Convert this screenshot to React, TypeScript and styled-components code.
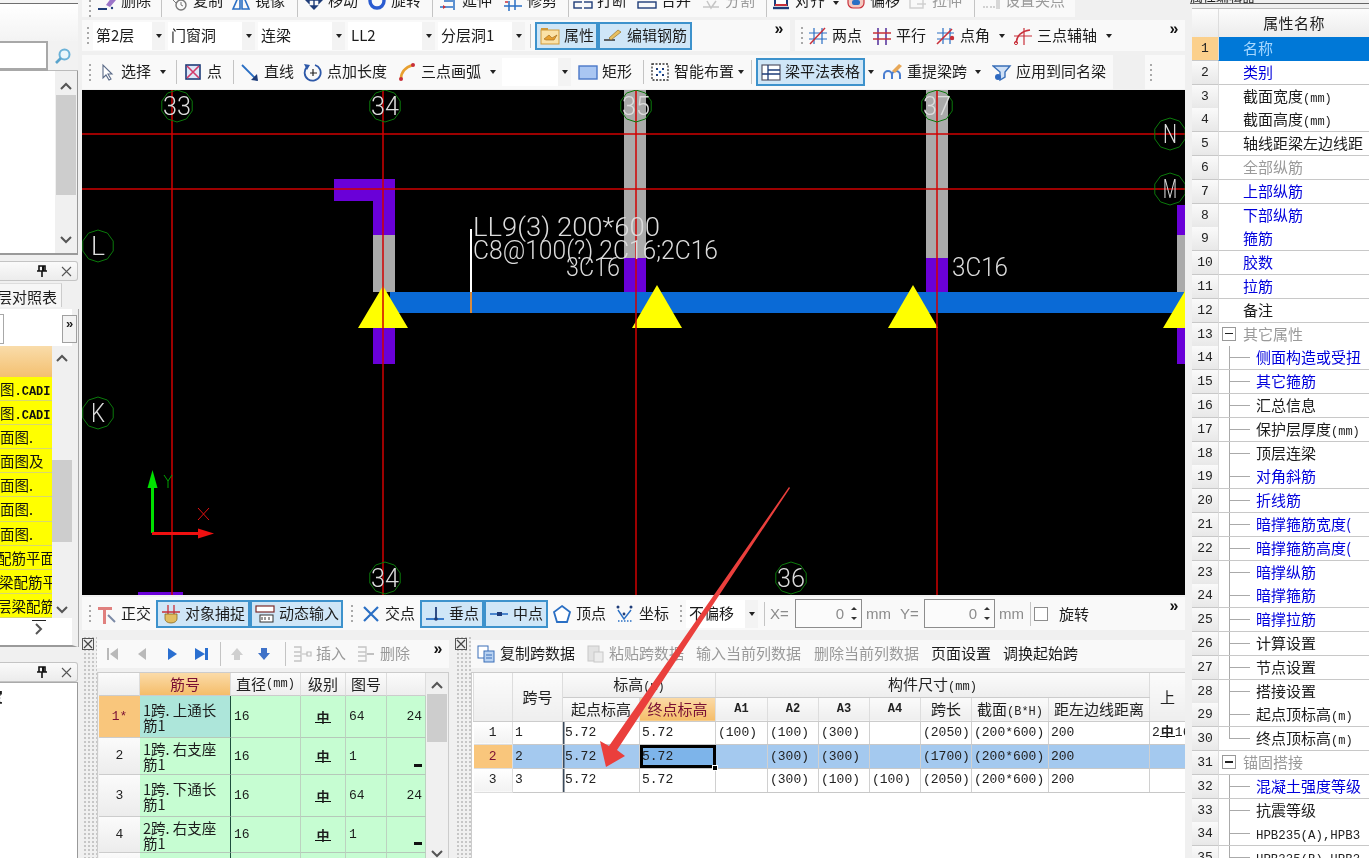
import React from 'react';
import styled, { createGlobalStyle } from 'styled-components';

const CJK = '"Noto Sans CJK SC","Liberation Sans",sans-serif';
const MONO = '"Liberation Mono","Noto Sans CJK SC",monospace';

const Global = createGlobalStyle`
  html, body { margin: 0; padding: 0; background: #f0f0f0; overflow: hidden; }
  * { box-sizing: border-box; }
`;

const Page = styled.div`
  position: relative; width: 1369px; height: 858px; overflow: hidden;
  display: grid; grid-template-columns: 82px 1108px 179px;
  background: #f0f0f0; color: #1c1c1c; font: 15px/20px ${CJK};
  filter: blur(0.3px);
`;

/* ---------- toolbar parts ---------- */
const Center = styled.main`display: flex; flex-direction: column; min-width: 0;`;
const Row = styled.div<{ $h: number; $mt?: number }>`
  display: flex; height: ${p => p.$h}px; margin-top: ${p => p.$mt ?? 0}px; flex: none; padding-right: 5px;
`;
const Seg = styled.div<{ $w?: number; $end?: boolean; $ml?: number }>`
  display: flex; align-items: ${p => (p.$end ? 'flex-end' : 'center')}; overflow: hidden;
  background: #f9f9f9; margin-left: ${p => p.$ml ?? 0}px;
  ${p => (p.$w ? `width:${p.$w}px;flex:none;` : 'flex:1;')}
`;
const Grip = styled.span<{ $w: number }>`
  width: ${p => p.$w}px; flex: none; align-self: center; display: flex; justify-content: center;
  &::before { content: ''; width: 2px; height: 17px; background: repeating-linear-gradient(#a9a9a9 0 2px, transparent 2px 5px); }
`;
const ToolBox = styled.span<{ $w: number; $grey?: boolean; $pad?: number; $active?: boolean; $tall?: number }>`
  width: ${p => p.$w}px; flex: none; display: flex; align-items: center; gap: 4px; white-space: nowrap;
  height: ${p => p.$tall ?? 28}px; padding-left: ${p => p.$pad ?? 0}px;
  color: ${p => (p.$grey ? '#9a9a9a' : '#1c1c1c')};
  ${p => (p.$active ? 'background:#cfe6f7;border:2px solid #3d92cc;' : '')}
  & > span { padding-bottom: 2px; }
`;
const Ico = styled.svg.attrs({ viewBox: '0 0 20 20' })`width: 20px; height: 20px; flex: none;`;
const Caret = styled.span<{ $w?: number }>`
  width: ${p => p.$w ?? 12}px; flex: none; display: flex; justify-content: center;
  &::before { content: ''; border-top: 4px solid #222; border-left: 3.5px solid transparent; border-right: 3.5px solid transparent; }
`;
const Sep = styled.span<{ $w: number }>`
  width: ${p => p.$w}px; height: 24px; flex: none; display: flex; justify-content: center;
  &::before { content: ''; width: 1px; background: #c4c4c4; }
`;
const Gap = styled.span<{ $w: number }>`width: ${p => p.$w}px; flex: none;`;
const Fill = styled.span`flex: 1;`;
const ComboBox = styled.span<{ $w: number }>`
  width: ${p => p.$w}px; height: 28px; flex: none; background: #fff; display: flex; align-items: center;
  justify-content: space-between; padding-left: 3px; white-space: nowrap;
  & > span:first-child { padding-bottom: 2px; }
`;
const ComboArrow = styled.span`
  width: 13px; height: 100%; flex: none; background: #f3f3f3; display: flex; align-items: center; justify-content: center;
  &::before { content: ''; border-top: 4px solid #222; border-left: 3.5px solid transparent; border-right: 3.5px solid transparent; }
`;
const More = styled.span<{ $w?: number }>`
  width: ${p => p.$w ?? 18}px; flex: none; align-self: flex-start; text-align: center; margin-right: 2px;
  font: bold 16px/18px "Liberation Sans", sans-serif; color: #111;
`;
const GreyLabel = styled.span<{ $w: number }>`
  width: ${p => p.$w}px; flex: none; color: #8c8c8c; font: 15px/20px "Liberation Sans", sans-serif; white-space: nowrap;
`;
const Num = styled.span<{ $w: number }>`
  width: ${p => p.$w}px; height: 29px; flex: none; display: flex; align-items: center; justify-content: flex-end;
  border: 1px solid #8d8d8d; background: #fbfbfb; color: #8c8c8c; font: 15px/20px "Liberation Sans", sans-serif; padding-right: 2px; gap: 5px;
`;
const Spin = styled.span`
  width: 10px; display: flex; flex-direction: column; gap: 7px; align-items: center;
  &::before { content: ''; border-bottom: 3px solid #333; border-left: 3px solid transparent; border-right: 3px solid transparent; }
  &::after { content: ''; border-top: 3px solid #333; border-left: 3px solid transparent; border-right: 3px solid transparent; }
`;
const Check = styled.span`width: 14px; height: 14px; flex: none; border: 1px solid #8d8d8d; background: #fff;`;

const Tool: React.FC<{ w: number; label?: string; icon?: React.ReactNode; grey?: boolean; active?: boolean; pad?: number }> =
  ({ w, label, icon, grey, active, pad }) => (
    <ToolBox $w={w} $grey={grey} $active={active} $pad={pad ?? (active ? 3 : 0)}>
      {icon}{label && <span>{label}</span>}
    </ToolBox>
  );
const Combo: React.FC<{ w: number; label?: string }> = ({ w, label }) => (
  <ComboBox $w={w}><span>{label}</span><ComboArrow /></ComboBox>
);

/* ---------- icons ---------- */
const B = '#2a6fc4', R = '#c8303a', N = '#1e3c78', O = '#e8a030', G = '#b9b9b9';
const ic: Record<string, React.ReactNode> = {
  del: <Ico><path d="M9 14l6-8 4 3-6 7z" fill="#9b74c8" /><path d="M1 18h9" stroke={N} strokeWidth="2" /><circle cx="15" cy="17" r="1.2" fill={N} /></Ico>,
  copy: <Ico><circle cx="12" cy="14" r="5" fill="none" stroke="#777" strokeWidth="1.4" /><path d="M12 11v3l2 1" stroke="#777" fill="none" /><path d="M2 7l5 5" stroke="#777" /></Ico>,
  mirror: <Ico><path d="M9 2L2 18h7zM11 2l7 16h-7z" fill="none" stroke={B} strokeWidth="1.6" /></Ico>,
  move: <Ico><path d="M10 3v14M3 9h14M10 18l-3-3h6zM2 9l3-3v6zM18 9l-3-3v6z" stroke={N} fill={N} strokeWidth="1.4" /></Ico>,
  rotate: <Ico><circle cx="10" cy="10" r="7" fill="none" stroke="#2a5bd0" strokeWidth="3.4" /></Ico>,
  extend: <Ico><path d="M2 16h13M6 10h9M16 4v15" stroke={B} strokeWidth="1.5" /><path d="M5 14l3 2-3 2z" fill={R} /></Ico>,
  trim: <Ico><path d="M1 15h18M6 10v10M12 4v15" stroke={B} strokeWidth="1.5" /><path d="M2 11h3" stroke={R} strokeWidth="1.5" /></Ico>,
  brk: <Ico><rect x="1" y="11" width="18" height="6" fill="none" stroke={N} strokeWidth="1.4" /><path d="M10 8v12" stroke="#f9f9f9" strokeWidth="2" /></Ico>,
  merge: <Ico><rect x="1" y="11" width="18" height="6" fill="none" stroke={N} strokeWidth="1.4" /></Ico>,
  split: <Ico><path d="M2 16h16M6 10l4 7 5-7" stroke="#c6c6c6" strokeWidth="1.5" fill="none" /></Ico>,
  align: <Ico><rect x="4" y="2" width="12" height="12" fill="#fff" stroke={N} strokeWidth="2" /><path d="M2 17h16" stroke={N} strokeWidth="2.4" /><path d="M4 14h12" stroke={R} strokeWidth="2" /></Ico>,
  offset: <Ico><rect x="2" y="4" width="16" height="13" rx="5" fill="#f4c9c0" stroke={R} strokeWidth="1.2" /><rect x="6" y="9" width="8" height="5" rx="2" fill={B} /></Ico>,
  stretch: <Ico><rect x="2" y="6" width="13" height="11" fill="none" stroke="#cfcfcf" strokeWidth="1.4" /><path d="M9 13h9" stroke="#cfcfcf" strokeWidth="1.4" /></Ico>,
  grippt: <Ico><path d="M2 16h5M9 16h5" stroke="#c4c4c4" strokeWidth="1.5" strokeDasharray="2 1" /><rect x="15" y="9" width="4" height="9" fill="#d7d7d7" /></Ico>,
  attr: <Ico><rect x="1" y="4" width="18" height="14" fill="#fbe2a8" stroke="#d19a3a" /><path d="M1 4h7v-2h-7z" fill="#d19a3a" /><path d="M4 13l5-4 3 3 5-3-3 5H6z" fill={O} stroke="#9a6418" strokeWidth=".6" /></Ico>,
  edit: <Ico><path d="M1 14h11" stroke="#333" strokeWidth="1.5" /><path d="M6 12l9-8 3 2-10 8z" fill="#e8c060" stroke="#96732a" strokeWidth=".7" /></Ico>,
  twop: <Ico><path d="M6 2v16M14 2v16M1 7h18M1 13h18" stroke={B} strokeWidth="1.2" /><path d="M2 18L17 2" stroke={R} strokeWidth="1.5" /></Ico>,
  para: <Ico><path d="M6 2v17M14 2v17" stroke="#5c3aa0" strokeWidth="1.6" /><path d="M1 7h18M1 13h18" stroke={R} strokeWidth="1.6" /></Ico>,
  angle: <Ico><path d="M7 2v16M14 2v16M1 7h17M1 13h17" stroke={B} strokeWidth="1.2" /><path d="M1 18L16 3" stroke={R} strokeWidth="1.6" /><circle cx="16" cy="12" r="2.2" fill={R} /></Ico>,
  threeaxis: <Ico><path d="M3 17C4 9 9 5 17 4" fill="none" stroke={R} strokeWidth="1.6" /><path d="M1 10h18M11 2v17" stroke={R} strokeWidth="1.2" /><circle cx="3" cy="17" r="1.6" fill="none" stroke={R} /></Ico>,
  select: <Ico><path d="M6 3v13l3-3 3 5 2-1-3-5h4z" fill="#fff" stroke="#5b6b88" strokeWidth="1.1" /></Ico>,
  point: <Ico><rect x="3" y="3" width="14" height="14" fill="#dde7f8" stroke={N} strokeWidth="1.6" /><path d="M4 4l12 12M16 4L4 16" stroke="#d23a6a" strokeWidth="1.6" /></Ico>,
  line: <Ico><path d="M2 3l15 15" stroke={B} strokeWidth="1.8" /><path d="M18 19l-7-1 6-6z" fill={N} /></Ico>,
  plusLen: <Ico><path d="M4 5a8 8 0 1 0 8-2" fill="none" stroke="#2d58a8" strokeWidth="1.8" /><path d="M1 2l6 1-3 5z" fill="#2d58a8" /><path d="M10 7v7M7 11h7" stroke="#222" strokeWidth="1.2" /></Ico>,
  arc: <Ico><path d="M4 17C4 9 9 5 16 3" fill="none" stroke={O} strokeWidth="2.6" /><circle cx="4" cy="17" r="2" fill={R} /><circle cx="16" cy="3" r="2" fill={R} /></Ico>,
  rect: <Ico><rect x="1" y="4" width="18" height="13" fill="#a9c6f2" stroke="#4b78c8" strokeWidth="1.4" /></Ico>,
  smart: <Ico><rect x="2" y="2" width="16" height="16" fill="#fff" stroke="#333" strokeWidth="1.3" strokeDasharray="2 1.5" /><path d="M6 6h2v2H6zM12 6h2v2h-2zM6 12h2v2H6zM12 12h2v2h-2z" fill={N} /><circle cx="10" cy="10" r="1.3" fill={B} /></Ico>,
  beamTable: <Ico><rect x="1" y="3" width="18" height="15" fill="#fff" stroke="#556" strokeWidth="1.2" /><path d="M1 12h18M7 3v15M7 8h12" stroke={N} strokeWidth="1.3" /></Ico>,
  refetch: <Ico><path d="M1 17v-4a4 4 0 0 1 8 0v4M9 17v-4a4 4 0 0 1 8 0v4" fill="none" stroke="#4a7ed0" strokeWidth="2" /><path d="M9 9l7-7 3 2-7 7z" fill="#e8a858" /></Ico>,
  apply: <Ico><path d="M1 4h17l-5 6v5l-5 3v-8z" fill="#cfe0f6" stroke="#3a6fb8" strokeWidth="1.4" /><circle cx="6" cy="15" r="3" fill="#2e69c0" /></Ico>,
  ortho: <Ico><path d="M1 3h14v3H9v14H6V6H1z" fill="#e0807e" /><path d="M11 11l7 7" stroke="#7b8aa6" strokeWidth="2" /></Ico>,
  snap: <Ico><path d="M1 8h18M7 1v9M13 1v9" stroke={R} strokeWidth="1.3" /><path d="M4 10h12v5a6 4 0 0 1-12 0z" fill="#e2bd60" stroke="#8a6a20" strokeWidth=".8" /></Ico>,
  dyn: <Ico><rect x="1" y="2" width="18" height="6" fill="#fff" stroke="#7a2a2a" strokeWidth="1.2" /><rect x="5" y="11" width="13" height="7" fill="#fff" stroke="#333" /><path d="M7 13v3M10 13v3M14 13v3" stroke="#333" /></Ico>,
  cross: <Ico><path d="M3 3l14 14M17 3L3 17" stroke={B} strokeWidth="2.2" /></Ico>,
  perp: <Ico><path d="M1 15h18" stroke={B} strokeWidth="1.8" /><path d="M11 3v12" stroke={N} strokeWidth="1.8" /><circle cx="11" cy="15" r="1.8" fill={N} /></Ico>,
  mid: <Ico><path d="M1 10h18" stroke={B} strokeWidth="1.6" /><rect x="8" y="8" width="5" height="4" fill={N} /></Ico>,
  vertex: <Ico><path d="M10 2l8 6-3 10H5L2 8z" fill="#fff" stroke={B} strokeWidth="1.8" /></Ico>,
  coord: <Ico><path d="M3 6l6 9 7-9" fill="none" stroke={B} strokeWidth="1.4" /><path d="M3 17h15" stroke={B} strokeDasharray="1.5 1.5" strokeWidth="1.4" /><circle cx="3" cy="3" r="1.5" fill={N} /><circle cx="16" cy="3" r="1.5" fill={N} /><circle cx="9" cy="10" r="1.4" fill={N} /></Ico>,
  ins: <Ico><path d="M2 3h7v14H2M2 8h7M2 12h7" fill="none" stroke="#c4c4c4" strokeWidth="1.3" /><path d="M10 10h5M15 8h4v4h-4z" fill="none" stroke="#bbb" strokeWidth="1.2" /></Ico>,
  rem: <Ico><path d="M2 3h8v14H2M2 8h8M2 12h8" fill="none" stroke="#c4c4c4" strokeWidth="1.3" /><path d="M11 10h7" stroke="#aaa" strokeWidth="1.4" /></Ico>,
  copyDoc: <Ico><rect x="2" y="2" width="10" height="12" fill="#fff" stroke="#3a6fb8" /><rect x="8" y="7" width="10" height="11" fill="#b8d2f2" stroke="#3a6fb8" /><path d="M10 11h6M10 14h6" stroke="#3a6fb8" /></Ico>,
  pasteDoc: <Ico><rect x="3" y="2" width="11" height="15" fill="#e2e2e2" stroke="#c8c8c8" /><rect x="9" y="8" width="9" height="10" fill="#ececec" stroke="#c8c8c8" /></Ico>,
};

const Nav: React.FC<{ w: number; d: string; c: string }> = ({ w, d, c }) => (
  <ToolBox $w={w} $pad={Math.round((w - 20) / 2)}><Ico><path d={d} fill={c} /></Ico></ToolBox>
);

/* ---------- left column ---------- */
const Left = styled.aside`display: flex; flex-direction: column; width: 78px; height: 858px;`;
const TopStrip = styled.div`height: 4px; flex: none; border-bottom: 1px solid #6f6f6f; background: #f4f4f4;`;
const Fade = styled.div`height: 37px; flex: none; background: linear-gradient(#fff, #f3f3f3);`;
const SearchRow = styled.div`display: flex; height: 30px; flex: none;`;
const SearchField = styled.div`width: 48px; background: #fff; border: 1px solid #a8a8a8; border-width: 2px 2px 3px 0;`;
const SearchBtn = styled.div`flex: 1; display: flex; align-items: center; justify-content: center; background: #f2f2f2; border-bottom: 1px solid #bbb;`;
const ListBox = styled.div<{ $h: number }>`
  height: ${p => p.$h}px; flex: none; display: flex; background: #fff;
  border-right: 1px solid #999; border-bottom: 2px solid #9a9a9a;
`;
const ListBody = styled.div`flex: 1; min-width: 0; background: #fff;`;
const Track = styled.div<{ $w: number; $pb?: number }>`
  width: ${p => p.$w}px; flex: none; background: #f0f0f0; display: flex; flex-direction: column; align-items: center;
  padding-bottom: ${p => p.$pb ?? 0}px;
`;
const Chev = styled.svg.attrs({ viewBox: '0 0 12 8' })<{ $flip?: boolean; $mt?: number }>`
  width: 12px; height: 8px; flex: none; margin-top: ${p => p.$mt ?? 0}px;
  transform: ${p => (p.$flip ? 'rotate(180deg)' : 'none')};
`;
const Thumb = styled.div<{ $mt: number; $h: number; $w?: number }>`
  width: ${p => p.$w ?? 20}px; height: ${p => p.$h}px; flex: none; margin-top: ${p => p.$mt}px; background: #cdcdcd;
`;
const Spring = styled.div`flex: 1;`;
const ChevUp = (p: { mt?: number }) => <Chev $mt={p.mt}><path d="M1 7l5-5 5 5" fill="none" stroke="#555" strokeWidth="2" /></Chev>;
const ChevDown = (p: { mt?: number }) => <Chev $flip $mt={p.mt}><path d="M1 7l5-5 5 5" fill="none" stroke="#555" strokeWidth="2" /></Chev>;

const PanelHead = styled.div<{ $mt: number }>`
  height: 20px; flex: none; margin-top: ${p => p.$mt}px; display: flex; align-items: center; justify-content: flex-end; gap: 14px; padding-right: 5px;
  background: linear-gradient(#fafafa, #ececec); border: 1px solid #c4c4c4; border-left: 0; border-radius: 0 3px 3px 0;
  font: bold 13px/20px "Liberation Sans", sans-serif;
`;
const PinIco = () => (
  <svg width="10" height="12" viewBox="0 0 10 12"><path d="M2 1h6v5H2zM0 6h10M5 6v6" fill="none" stroke="#111" strokeWidth="1.6" /><path d="M6 1v5" stroke="#111" strokeWidth="2" /></svg>
);
const XIco = () => (
  <svg width="11" height="11" viewBox="0 0 11 11"><path d="M1 1l9 9M10 1l-9 9" stroke="#555" strokeWidth="1.1" /></svg>
);
const TabRow = styled.div`height: 24px; margin-top: 2px; flex: none; display: flex;`;
const TabLabel = styled.div`
  width: 62px; background: #f6f6f6; border-top: 1px solid #ddd; border-right: 1px solid #ccc; text-indent: -3px; overflow: hidden; white-space: nowrap; line-height: 25px;
`;
const Panel2 = styled.div`
  height: 338px; flex: none; margin-top: 2px; background: #fff; border-right: 6px solid #f0f0f0; border-bottom: 2px solid #9a9a9a;
  box-shadow: 1px 0 0 #a8a8a8; display: flex; flex-direction: column; position: relative;
`;
const FilterRow = styled.div`height: 37px; flex: none; display: flex; align-items: center; justify-content: space-between; padding-top: 2px;`;
const FilterInput = styled.div`width: 4px; height: 30px; border: 1px solid #a8a8a8; border-left: 0;`;
const FilterMore = styled.div`
  width: 15px; height: 28px; margin-right: -5px; border: 1px solid #a0a0a0; background: #f3f3f3; text-align: center;
  font: bold 13px/16px "Liberation Sans", sans-serif;
`;
const YellowWrap = styled.div`display: flex; flex: none;`;
const YellowCol = styled.div`width: 52px; flex: none;`;
const YellowHead = styled.div`height: 31px; background: linear-gradient(#f9dcaa, #f4c070);`;
const YellowCell = styled.div<{ $i: number }>`
  height: 24.1px; background: #ff0; border-bottom: 1px solid #d8d870; overflow: hidden; white-space: nowrap;
  text-indent: ${p => p.$i}px; font: 14.5px/23px ${CJK}; color: #111;
`;
const Latin = styled.span`font: bold 12px/20px "Liberation Mono", monospace;`;
const HScroll = styled.div`height: 23px; flex: none; display: flex; justify-content: center; align-items: center; padding-left: 6px;`;
const BlackTick = styled.div`position: absolute; left: 32px; bottom: 24px; width: 14px; height: 1px; background: #222;`;
const Panel3 = styled.div`
  flex: 1; background: #fff; border-right: 1px solid #999; border-top: 1px solid #aaa; overflow: hidden; white-space: nowrap; text-indent: -12px; font-weight: 700; padding-top: 3px;
`;

/* ---------- canvas ---------- */
const Canvas = styled.svg.attrs({ viewBox: '82 90 1103 505' })`
  width: 1103px; height: 505px; flex: none; display: block; background: #000; margin-top: 1px;
`;
const AxisTag = styled.text`font: 300 25px Roboto, "Liberation Sans", sans-serif; fill: #dcdcdc;`;
const Mark = styled.text`font: 300 25px Roboto, "Liberation Sans", sans-serif; fill: #dcdcdc;`;

const circles: [number, number, string][] = [
  [177, 106, '33'], [385, 106, '34'], [636, 106, '35'], [937, 106, '37'], [1170, 134, 'N'], [1170, 189, 'M'],
  [98, 246, 'L'], [98, 413, 'K'], [385, 578, '34'], [791, 578, '36'],
];
const octagon = (x: number, y: number, r = 16) =>
  Array.from({ length: 10 }, (_, i) => {
    const a = (Math.PI * 2 * i) / 10 + Math.PI / 10;
    return `${x + r * Math.cos(a)},${y + r * Math.sin(a)}`;
  }).join(' ');
const tri = (x: number, top: number) => `${x},${top} ${x - 25},328 ${x + 25},328`;

const Drawing = () => (
  <Canvas>
    <rect x="624" y="90" width="22" height="168" fill="#aaa" />
    <rect x="926" y="90" width="22" height="168" fill="#aaa" />
    <rect x="624" y="258" width="22" height="34" fill="#6a00d8" />
    <rect x="926" y="258" width="22" height="34" fill="#6a00d8" />
    <path d="M334 179h61v56h-22v-34h-39z" fill="#6a00d8" />
    <rect x="373" y="235" width="22" height="57" fill="#aaa" />
    <rect x="373" y="328" width="22" height="36" fill="#6a00d8" />
    <rect x="1177" y="205" width="8" height="30" fill="#6a00d8" />
    <rect x="1177" y="235" width="8" height="57" fill="#aaa" />
    <rect x="1177" y="328" width="8" height="36" fill="#6a00d8" />
    <rect x="138" y="592" width="45" height="3" fill="#6a00d8" />
    <rect x="390" y="292" width="795" height="21" fill="#0a6ad6" />
    <rect x="470" y="229" width="2" height="63" fill="#fff" />
    <rect x="470" y="292" width="2" height="21" fill="#d88a3c" />
    <polygon points={tri(383, 286)} fill="#ff0" />
    <polygon points={tri(657, 285)} fill="#ff0" />
    <polygon points={tri(913, 285)} fill="#ff0" />
    <polygon points={tri(1188, 286)} fill="#ff0" />
    {[172, 383, 636, 937].map(x => <line key={x} x1={x} x2={x} y1="90" y2="595" stroke="#d00000" strokeWidth="1.5" />)}
    {[134, 189].map(y => <line key={y} x1="82" x2="1185" y1={y} y2={y} stroke="#d00000" strokeWidth="1.5" />)}
    {circles.map(([x, y, t], i) => (
      <g key={i}>
        <polygon points={octagon(x, y)} fill="none" stroke="#0b7a0b" />
        <AxisTag x={x} y={y + 9} textAnchor="middle" textLength={t.length > 1 ? 28 : 14} lengthAdjust="spacingAndGlyphs">{t}</AxisTag>
      </g>
    ))}
    <Mark x="473" y="236" textLength="187" lengthAdjust="spacingAndGlyphs">LL9(3) 200*600</Mark>
    <Mark x="473" y="259" textLength="245" lengthAdjust="spacingAndGlyphs">C8@100(?) 2C16;2C16</Mark>
    <Mark x="566" y="276" textLength="54" lengthAdjust="spacingAndGlyphs">3C16</Mark>
    <Mark x="952" y="276" textLength="56" lengthAdjust="spacingAndGlyphs">3C16</Mark>
    <path d="M151 533V482h3v51z" fill="#00e000" />
    <path d="M152.5 470l-5 18h10z" fill="#00e000" />
    <path d="M152 532h50v3h-50z" fill="#f01010" />
    <path d="M214 533.5l-16-5v10z" fill="#f01010" />
    <path d="M164 475l4 6 4-6M168 481v7" fill="none" stroke="#00a000" />
    <path d="M198 508l11 12M209 508l-11 12" stroke="#e01010" />
  </Canvas>
);

const Overlay = styled.svg.attrs({ viewBox: '0 0 1369 858' })`
  position: absolute; left: 0; top: 0; width: 1369px; height: 858px; pointer-events: none;
`;

/* ---------- bottom panels ---------- */
const Bottom = styled.div`height: 222px; flex: none; margin-top: 6px; display: flex;`;
const Dock = styled.div<{ $w: number }>`
  width: ${p => p.$w}px; flex: none; padding-top: 2px;
  background: radial-gradient(#c6c6c6 1px, transparent 1.3px) 1px 16px / 4px 4px;
`;
const DockIco = () => (
  <svg width="12" height="12" viewBox="0 0 12 12" style={{ display: 'block' }}><rect x=".5" y=".5" width="11" height="11" fill="#eee" stroke="#555" /><path d="M2 2l8 8M10 2l-8 8" stroke="#444" strokeWidth="1.2" /></svg>
);
const Dockee = styled.section<{ $w: number }>`width: ${p => p.$w}px; flex: none; display: flex; flex-direction: column;`;
const SubBar = styled.div<{ $w?: number }>`
  height: 28px; margin-top: 4px; flex: none; display: flex; align-items: center; background: #f9f9f9;
  ${p => (p.$w ? `width:${p.$w}px;` : '')}
`;

const BarWrap = styled.div`
  margin-top: 4px; display: flex; width: 352px; height: 186px; overflow: hidden; border-top: 1px solid #ccc; border-left: 1px solid #ccc; border-right: 1px solid #ccc; padding-left: 1px;
`;
const BarGrid = styled.div`
  width: 327px; flex: none; display: grid; grid-template-columns: 41px 91px 70px 45px 41px 39px;
  grid-template-rows: 23px 42px 37px 42px 36px 20px;
`;
const BH = styled.div<{ $hot?: boolean }>`
  display: flex; align-items: center; justify-content: center; white-space: nowrap; border-right: 1px solid #ddd; border-bottom: 1px solid #ccc;
  background: ${p => (p.$hot ? 'linear-gradient(#fbdba8,#f5bd6a)' : 'linear-gradient(#fbfbfb,#eeeeee)')};
  color: ${p => (p.$hot ? '#7a1034' : '#222')};
`;
const BNum = styled.div<{ $hot?: boolean }>`
  display: flex; align-items: center; justify-content: center; border-bottom: 1px solid #ccc;
  background: ${p => (p.$hot ? '#f9c67c' : 'linear-gradient(#fbfbfb,#ececec)')};
  color: ${p => (p.$hot ? '#7a1034' : '#222')}; font: 13px/16px ${MONO};
`;
const BCell = styled.div<{ $sel?: boolean; $name?: boolean; $align?: string }>`
  display: flex; align-items: center; justify-content: ${p => p.$align ?? 'flex-start'}; padding: 0 3px;
  background: ${p => (p.$sel ? '#ade6da' : '#c6fdd2')}; border-bottom: 1px solid #b6c8ba; border-right: 1px solid ${p => (p.$name ? '#1f4e3e' : '#bcd2c0')};
  font: 13px/15px ${MONO}; overflow: hidden;
`;
const BName = styled.span`display: block; font: 14.5px/15px ${CJK};`;
const Rebar = styled.b`font: bold 13px/12px ${CJK}; border-bottom: 1.5px solid #111; padding: 0 1px; display: inline-block; line-height: 11px;`;
const Dash = styled.span`width: 8px; height: 3px; background: #111; align-self: flex-end; margin-bottom: 7px;`;

const SpanWrap = styled.div`
  margin-top: 4px; flex: 1; background: #fff; border-top: 1px solid #ccc; border-left: 1px solid #ccc; padding-left: 1px; overflow: hidden;
`;
const SpanTable = styled.table`
  border-collapse: collapse; table-layout: fixed; width: 712px; font: 15px/20px ${CJK};
`;
const TH = styled.th<{ $hot?: boolean; $h: number; $small?: boolean }>`
  height: ${p => p.$h}px; padding: 0; font-weight: 400; white-space: nowrap; overflow: hidden; border: 1px solid #ddd; border-top: 0; border-bottom-color: #ccc;
  background: ${p => (p.$hot ? 'linear-gradient(#fbdba8,#f5bd6a)' : 'linear-gradient(#fbfbfb,#eeeeee)')};
  color: ${p => (p.$hot ? '#7a1034' : '#222')};
  ${p => (p.$small ? `font:bold 12px/16px ${MONO};` : '')}
`;
const TN = styled.td<{ $hot?: boolean }>`
  height: 23.7px; padding: 0; text-align: center; font: 13px/16px ${MONO}; border: 1px solid #ddd; border-top: 0; border-left: 0;
  background: ${p => (p.$hot ? '#f9c67c' : 'linear-gradient(#fff,#f2f2f2)')}; color: ${p => (p.$hot ? '#7a1034' : '#222')};
`;
const TD = styled.td<{ $on?: boolean; $start?: boolean; $cur?: boolean }>`
  position: relative; height: 23.7px; padding: 0 2px; white-space: nowrap; overflow: ${p => (p.$cur ? 'visible' : 'hidden')}; font: 13px/16px ${MONO};
  border-right: 1px solid #d0d0d0; border-bottom: 1px solid #c8c8c8; color: #222;
  background: ${p => (p.$cur ? '#7db4ea' : p.$on ? '#a4c9ef' : '#fff')};
  ${p => (p.$start ? 'box-shadow: inset 1.5px 0 0 #3a4a5c;' : '')}
  ${p => (p.$cur ? 'outline:3px solid #000;outline-offset:-3px;z-index:2;' : '')}
`;
const Handle = styled.i`position: absolute; right: -3px; bottom: -3px; width: 6px; height: 6px; background: #000; border: 1px solid #fff;`;
const Small = styled.span`font: 12px/16px ${MONO};`;

/* ---------- right panel ---------- */
const Right = styled.aside`display: flex; flex-direction: column; padding-left: 2px;`;
const TitleStrip = styled.div`
  height: 4px; flex: none; margin-left: -2px; border-bottom: 1px solid #666; overflow: hidden; display: flex; align-items: flex-end; font-size: 13px; line-height: 14px; white-space: nowrap;
`;
const PropHead = styled.div`
  margin-top: 4px; height: 29px; flex: none; display: grid; grid-template-columns: 26px 1fr; background: linear-gradient(#fcfcfc,#ececec); border-top: 1px solid #bbb;
`;
const PropHeadName = styled.div`text-align: center; line-height: 28px; letter-spacing: .4px; border-left: 1px solid #ddd;`;
const PropRow = styled.div`display: grid; grid-template-columns: 26px 1fr; height: 23.8px; flex: none;`;
const PropNum = styled.div<{ $hot?: boolean }>`
  text-align: center; font: 13px/23px ${MONO}; border-bottom: 1px solid #c8c8c8; color: #222;
  background: ${p => (p.$hot ? '#fbd08c' : 'linear-gradient(#fafafa,#e8e8e8)')};
`;
const PropName = styled.div<{ $tone: string }>`
  display: flex; align-items: stretch; white-space: nowrap; overflow: hidden; background: ${p => (p.$tone === 'sel' ? '#0078d7' : '#fff')};
  border-bottom: 1px solid ${p => (p.$tone === 'sel' ? '#0078d7' : '#c8c8c8')}; border-left: 1px solid #ddd;
  line-height: 22px;
  color: ${p => ({ sel: '#a6d8ff', b: '#0000dc', g: '#9a9a9a', k: '#1c1c1c' }[p.$tone])};
`;
const Elbow = styled.span<{ $last?: boolean }>`
  width: 21px; margin-left: 10px; flex: none;
  background: linear-gradient(#aaa,#aaa) 0 0 / 1px ${p => (p.$last ? '50%' : '100%')} no-repeat, linear-gradient(#aaa,#aaa) 0 50% / 100% 1px no-repeat;
`;
const Minus = styled.span`
  width: 14px; height: 14px; margin: 4px 7px 0 3px; flex: none; border: 1px solid #999; background: #fff; display: flex; align-items: center; justify-content: center;
  &::before { content: ''; width: 8px; height: 1.5px; background: #222; }
`;
const PropText = styled.span<{ $pl: number }>`padding-left: ${p => p.$pl}px;`;
const MonoText = styled.span`font: 12.4px/22px ${MONO}; color: #222;`;

type P = [string, string, string, string?];
const props: P[] = [
  ['名称', 'sel', 'p'], ['类别', 'b', 'p'], ['截面宽度', 'k', 'p', '(mm)'], ['截面高度', 'k', 'p', '(mm)'], ['轴线距梁左边线距', 'k', 'p'],
  ['全部纵筋', 'g', 'p'], ['上部纵筋', 'b', 'p'], ['下部纵筋', 'b', 'p'], ['箍筋', 'b', 'p'], ['胶数', 'b', 'p'], ['拉筋', 'b', 'p'], ['备注', 'k', 'p'],
  ['其它属性', 'g', 'g'], ['侧面构造或受扭', 'b', 't'], ['其它箍筋', 'b', 't'], ['汇总信息', 'k', 't'], ['保护层厚度', 'k', 't', '(mm)'], ['顶层连梁', 'k', 't'],
  ['对角斜筋', 'b', 't'], ['折线筋', 'b', 't'], ['暗撑箍筋宽度(', 'b', 't'], ['暗撑箍筋高度(', 'b', 't'], ['暗撑纵筋', 'b', 't'], ['暗撑箍筋', 'b', 't'], ['暗撑拉筋', 'b', 't'],
  ['计算设置', 'k', 't'], ['节点设置', 'k', 't'], ['搭接设置', 'k', 't'], ['起点顶标高', 'k', 't', '(m)'], ['终点顶标高', 'k', 'l', '(m)'],
  ['锚固搭接', 'g', 'g'], ['混凝土强度等级', 'b', 't'], ['抗震等级', 'k', 't'], ['HPB235(A),HPB3', 'k', 'm'], ['HRB335(B),HRB3', 'k', 'm'],
];

const yellow: [string, number, string?][] = [
  ['图', 0, '.CADI'], ['图', 0, '.CADI'], ['面图.', 0], ['面图及', 0], ['面图.', 0], ['面图.', 0], ['面图.', 0],
  ['配筋平面', -3], ['梁配筋平', -1], ['层梁配筋', -3],
];

const spanRows = [
  { n: '1', a1: '(100)', a2: '(100)', a3: '(300)', a4: '', len: '(2050)', top: true },
  { n: '2', a1: '', a2: '(300)', a3: '(300)', a4: '', len: '(1700)', on: true },
  { n: '3', a1: '', a2: '(300)', a3: '(100)', a4: '(100)', len: '(2050)' },
];

const barRows = [
  { k: '1*', name: '1跨. 上通长筋1', t: '64', v: '24', hot: true },
  { k: '2', name: '1跨. 右支座筋1', t: '1', v: '' },
  { k: '3', name: '1跨. 下通长筋1', t: '64', v: '24' },
  { k: '4', name: '2跨. 右支座筋1', t: '1', v: '' },
];

export default function App() {
  return (
    <Page>
      <Global />
      <Left>
        <TopStrip />
        <Fade />
        <SearchRow>
          <SearchField />
          <SearchBtn>
            <svg width="18" height="18" viewBox="0 0 18 18"><circle cx="10.5" cy="7.5" r="5" fill="#eaf6fb" stroke="#6bb2d8" strokeWidth="2" /><path d="M7 11l-5 5" stroke="#5aa4cc" strokeWidth="2.6" /></svg>
          </SearchBtn>
        </SearchRow>
        <ListBox $h={184}>
          <ListBody />
          <Track $w={22} $pb={9}>
            <ChevUp mt={11} />
            <Thumb $mt={5} $h={100} />
            <Spring />
            <ChevDown />
          </Track>
        </ListBox>
        <PanelHead $mt={6}><PinIco /><XIco /></PanelHead>
        <TabRow><TabLabel>层对照表</TabLabel></TabRow>
        <Panel2>
          <FilterRow><FilterInput /><FilterMore>»</FilterMore></FilterRow>
          <YellowWrap>
            <YellowCol>
              <YellowHead />
              {yellow.map(([t, i, l], k) => <YellowCell key={k} $i={i}>{t}{l && <Latin>{l}</Latin>}</YellowCell>)}
            </YellowCol>
            <Track $w={20} $pb={4}>
              <ChevUp mt={8} />
              <Thumb $mt={98} $h={82} />
              <Spring />
              <ChevDown />
            </Track>
          </YellowWrap>
          <HScroll>
            <svg width="8" height="12" viewBox="0 0 8 12"><path d="M1 1l5 5-5 5" fill="none" stroke="#555" strokeWidth="2" /></svg>
          </HScroll>
          <BlackTick />
        </Panel2>
        <PanelHead $mt={15}><PinIco /><XIco /></PanelHead>
        <Panel3>宝</Panel3>
      </Left>

      <Center>
        <Row $h={17}>
          <Seg $end>
            <Grip $w={15} />
            {([
              [57, '删除', 'del'], [-15], [62, '复制', 'copy'], [60, '镜像', 'mirror'], [-13], [63, '移动', 'move'], [60, '旋转', 'rotate'], [-11],
              [65, '延伸', 'extend'], [60, '修剪', 'trim'], [-10], [64, '打断', 'brk'], [64, '合并', 'merge'], [60, '分割', 'split', 1], [-10],
              [60, '对齐', 'align'],
            ] as [number, string?, string?, number?][]).map(([w, l, i, g], k) =>
              w < 0
                ? <Sep key={k} $w={-w} />
                : <ToolBox key={k} $w={w} $tall={33} $grey={!!g}>{ic[i!]}<span>{l}</span></ToolBox>
            )}
            <ToolBox $w={15} $tall={26}><Caret $w={10} /></ToolBox>
            <ToolBox $w={62} $tall={33}>{ic.offset}<span>偏移</span></ToolBox>
            <ToolBox $w={60} $tall={33} $grey>{ic.stretch}<span>拉伸</span></ToolBox>
            <Sep $w={13} />
            <ToolBox $w={90} $tall={33} $grey>{ic.grippt}<span>设置夹点</span></ToolBox>
          </Seg>
          <Gap $w={110} />
        </Row>

        <Row $h={31} $mt={3}>
          <Seg $w={708}>
            <Grip $w={11} />
            <Combo w={72} label="第2层" /><Gap $w={3} />
            <Combo w={87} label="门窗洞" /><Gap $w={3} />
            <Combo w={87} label="连梁" /><Gap $w={3} />
            <Combo w={87} label="LL2" /><Gap $w={3} />
            <Combo w={87} label="分层洞1" />
            <Sep $w={10} />
            <Tool w={63} label="属性" icon={ic.attr} active />
            <Tool w={94} label="编辑钢筋" icon={ic.edit} active pad={3} />
            <Fill />
            <More>»</More>
          </Seg>
          <Seg $ml={5}>
            <Grip $w={13} />
            <Tool w={64} label="两点" icon={ic.twop} />
            <Tool w={64} label="平行" icon={ic.para} />
            <Tool w={60} label="点角" icon={ic.angle} />
            <Caret />
            <Gap $w={5} />
            <Tool w={90} label="三点辅轴" icon={ic.threeaxis} />
            <Caret />
            <Fill />
            <More>»</More>
          </Seg>
        </Row>

        <Row $h={34} $mt={4}>
          <Seg $w={1031}>
            <Grip $w={15} />
            <Tool w={60} label="选择" icon={ic.select} />
            <Caret />
            <Sep $w={14} />
            <Tool w={44} label="点" icon={ic.point} />
            <Sep $w={13} />
            <Tool w={63} label="直线" icon={ic.line} />
            <Tool w={94} label="点加长度" icon={ic.plusLen} />
            <Tool w={90} label="三点画弧" icon={ic.arc} />
            <Caret />
            <Gap $w={3} />
            <Combo w={69} />
            <Gap $w={7} />
            <Tool w={58} label="矩形" icon={ic.rect} />
            <Sep $w={14} />
            <Tool w={85} label="智能布置" icon={ic.smart} />
            <Caret />
            <Sep $w={9} />
            <Tool w={109} label="梁平法表格" icon={ic.beamTable} active />
            <Caret />
            <Gap $w={6} />
            <Tool w={88} label="重提梁跨" icon={ic.refetch} />
            <Caret $w={14} />
            <Gap $w={7} />
            <Tool w={120} label="应用到同名梁" icon={ic.apply} />
          </Seg>
          <Gap $w={32} />
          <Seg>
            <Grip $w={12} />
          </Seg>
        </Row>

        <Drawing />

        <Row $h={33} $mt={2}>
          <Seg>
            <Grip $w={15} />
            <Tool w={59} label="正交" icon={ic.ortho} />
            <Tool w={94} label="对象捕捉" icon={ic.snap} active />
            <Tool w={93} label="动态输入" icon={ic.dyn} active pad={3} />
            <Grip $w={18} />
            <Tool w={59} label="交点" icon={ic.cross} />
            <Tool w={64} label="垂点" icon={ic.perp} active />
            <Tool w={64} label="中点" icon={ic.mid} active />
            <Gap $w={4} />
            <Tool w={63} label="顶点" icon={ic.vertex} />
            <Tool w={61} label="坐标" icon={ic.coord} />
            <Grip $w={10} />
            <Combo w={72} label="不偏移" />
            <Sep $w={12} />
            <GreyLabel $w={25}>X=</GreyLabel>
            <Num $w={67}>0<Spin /></Num>
            <Gap $w={4} />
            <GreyLabel $w={34}>mm</GreyLabel>
            <GreyLabel $w={24}>Y=</GreyLabel>
            <Num $w={71}>0<Spin /></Num>
            <Gap $w={4} />
            <GreyLabel $w={27}>mm</GreyLabel>
            <Sep $w={8} />
            <Check />
            <Gap $w={11} />
            <span>旋转</span>
            <Fill />
            <More>»</More>
          </Seg>
        </Row>

        <Bottom>
          <Dock $w={15}><DockIco /></Dock>
          <Dockee $w={358}>
            <SubBar $w={352}>
              <Nav w={30} d="M5 4h2v12H5zM16 4v12L8 10z" c={G} />
              <Nav w={30} d="M14 4v12L6 10z" c={G} />
              <Nav w={30} d="M6 4v12l9-6z" c="#2a6fd0" />
              <Nav w={30} d="M3 4v12l10-6zM13 4h3v12h-3z" c="#2a6fd0" />
              <Sep $w={6} />
              <Nav w={27} d="M10 4l6 7h-3v5H7v-5H4z" c="#cfcfcf" />
              <Nav w={28} d="M10 16l6-7h-3V4H7v5H4z" c="#3f72c8" />
              <Sep $w={14} />
              <Tool w={64} label="插入" icon={ic.ins} grey />
              <Tool w={60} label="删除" icon={ic.rem} grey />
              <Fill />
              <More>»</More>
            </SubBar>
            <BarWrap>
              <BarGrid>
                <BH />
                <BH $hot>筋号</BH>
                <BH>直径<Small>(mm)</Small></BH>
                <BH>级别</BH>
                <BH>图号</BH>
                <BH />
                {barRows.map(r => (
                  <React.Fragment key={r.k}>
                    <BNum $hot={r.hot}>{r.k}</BNum>
                    <BCell $sel={r.hot} $name><BName>{r.name}</BName></BCell>
                    <BCell>16</BCell>
                    <BCell $align="center"><Rebar>中</Rebar></BCell>
                    <BCell>{r.t}</BCell>
                    <BCell $align="flex-end">{r.v || <Dash />}</BCell>
                  </React.Fragment>
                ))}
                <BNum />
                <BCell $name />
                <BCell />
                <BCell />
                <BCell />
                <BCell />
              </BarGrid>
              <Track $w={22}>
                <ChevUp mt={8} />
                <Thumb $mt={5} $h={48} />
                <Spring />
                <ChevDown mt={0} />
              </Track>
            </BarWrap>
          </Dockee>
          <Dock $w={16}><DockIco /></Dock>
          <Dockee $w={714}>
            <SubBar>
              <Gap $w={5} />
              <Tool w={109} label="复制跨数据" icon={ic.copyDoc} />
              <Tool w={111} label="粘贴跨数据" icon={ic.pasteDoc} grey />
              <ToolBox $w={118} $grey><span>输入当前列数据</span></ToolBox>
              <ToolBox $w={117} $grey><span>删除当前列数据</span></ToolBox>
              <ToolBox $w={72}><span>页面设置</span></ToolBox>
              <ToolBox $w={80}><span>调换起始跨</span></ToolBox>
            </SubBar>
            <SpanWrap>
              <SpanTable>
                <colgroup>
                  {[39, 50, 77, 76, 52, 51, 51, 51, 51, 77, 101, 36].map((w, i) => <col key={i} width={w} />)}
                </colgroup>
                <thead>
                  <tr>
                    <TH $h={24} rowSpan={2} />
                    <TH $h={24} rowSpan={2}>跨号</TH>
                    <TH $h={24} colSpan={2}>标高<Small>(m)</Small></TH>
                    <TH $h={24} colSpan={7}>构件尺寸<Small>(mm)</Small></TH>
                    <TH $h={24} rowSpan={2}>上</TH>
                  </tr>
                  <tr>
                    <TH $h={24}>起点标高</TH>
                    <TH $h={24} $hot>终点标高</TH>
                    <TH $h={24} $small>A1</TH>
                    <TH $h={24} $small>A2</TH>
                    <TH $h={24} $small>A3</TH>
                    <TH $h={24} $small>A4</TH>
                    <TH $h={24}>跨长</TH>
                    <TH $h={24}>截面<Small>(B*H)</Small></TH>
                    <TH $h={24}>距左边线距离</TH>
                  </tr>
                </thead>
                <tbody>
                  {spanRows.map(r => (
                    <tr key={r.n}>
                      <TN $hot={r.on}>{r.n}</TN>
                      <TD $on={r.on}>{r.n}</TD>
                      <TD $on={r.on} $start>5.72</TD>
                      <TD $on={r.on} $cur={r.on}>5.72{r.on && <Handle />}</TD>
                      <TD $on={r.on}>{r.a1}</TD>
                      <TD $on={r.on}>{r.a2}</TD>
                      <TD $on={r.on}>{r.a3}</TD>
                      <TD $on={r.on}>{r.a4}</TD>
                      <TD $on={r.on}>{r.len}</TD>
                      <TD $on={r.on}>(200*600)</TD>
                      <TD $on={r.on}>200</TD>
                      <TD $on={r.on}>{r.top && <>2<Rebar>中</Rebar>16</>}</TD>
                    </tr>
                  ))}
                </tbody>
              </SpanTable>
            </SpanWrap>
          </Dockee>
        </Bottom>
      </Center>

      <Right>
        <TitleStrip>属性编辑器</TitleStrip>
        <PropHead><span /><PropHeadName>属性名称</PropHeadName></PropHead>
        {props.map(([name, tone, kind, unit], i) => (
          <PropRow key={i}>
            <PropNum $hot={i === 0}>{i + 1}</PropNum>
            <PropName $tone={tone}>
              {kind === 'g' && <Minus />}
              {(kind === 't' || kind === 'l' || kind === 'm') && <Elbow $last={kind === 'l'} />}
              <PropText $pl={kind === 'p' ? 24 : kind === 'g' ? 0 : 6}>
                {kind === 'm' ? <MonoText>{name}</MonoText> : name}
                {unit && <Small>{unit}</Small>}
              </PropText>
            </PropName>
          </PropRow>
        ))}
      </Right>

      <Overlay>
        <polygon points="790,488 617,750 625,756 606,767 600,741 609,746 789,487" fill="#ea3f3c" />
      </Overlay>
    </Page>
  );
}
